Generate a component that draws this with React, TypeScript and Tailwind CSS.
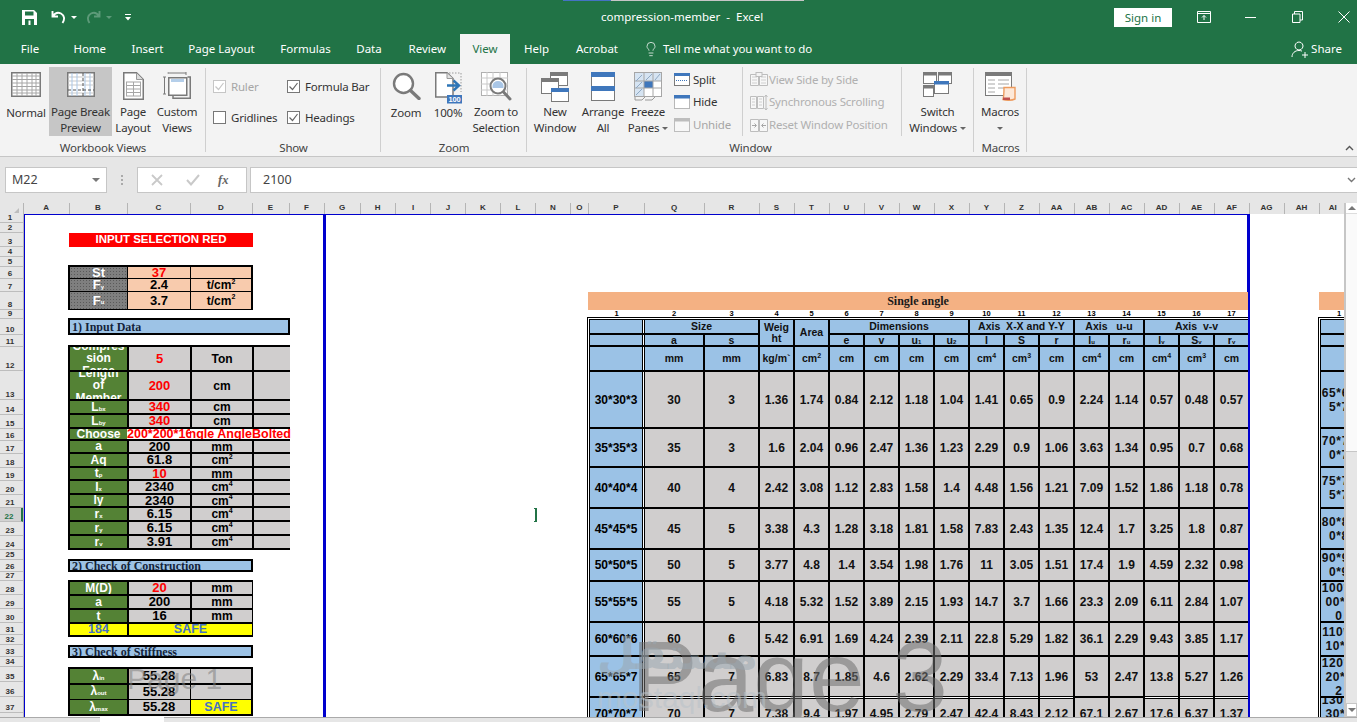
import React from 'react';
import { Lightbulb } from 'lucide-react';

const GREEN = '#217346';

// ---------- ribbon icons ----------
function NormalIcon() {
  return (
    <svg width="30" height="25" viewBox="0 0 30 25">
      <rect x="0.75" y="0.75" width="28.5" height="23.5" fill="#fff" stroke="#7a7a7a" strokeWidth="1.5" />
      {[4, 7.5, 11, 14.5, 18, 21].map((y) => (
        <line key={y} x1="1" x2="29" y1={y} y2={y} stroke="#a6a6a6" />
      ))}
      {[6, 11, 16, 21, 25].map((x) => (
        <line key={x} x1={x} x2={x} y1="1" y2="24" stroke="#a6a6a6" />
      ))}
    </svg>
  );
}

function PageBreakIcon() {
  return (
    <svg width="28" height="25" viewBox="0 0 28 25">
      <rect x="0.75" y="0.75" width="26.5" height="23.5" fill="#fff" stroke="#7a7a7a" strokeWidth="1.5" />
      {[5, 9, 13, 21].map((y) => (
        <line key={y} x1="1" x2="27" y1={y} y2={y} stroke="#c9c9c9" />
      ))}
      {[5, 10, 18, 23].map((x) => (
        <line key={x} x1={x} x2={x} y1="1" y2="24" stroke="#a9c6e6" />
      ))}
      <line x1="16" x2="16" y1="1" y2="24" stroke="#555" strokeDasharray="3 2" />
      <line x1="1" x2="27" y1="18" y2="18" stroke="#555" strokeDasharray="3 2" />
    </svg>
  );
}

function PageLayoutIcon() {
  return (
    <svg width="21" height="28" viewBox="0 0 21 28">
      <path d="M0.75 0.75H13.5L20.25 7.5V27.25H0.75Z" fill="#fff" stroke="#7a7a7a" strokeWidth="1.5" />
      <path d="M13.5 1V7.5H20" fill="#ddd" stroke="#999" />
      <rect x="3.5" y="10" width="14" height="14" fill="#fff" stroke="#a6a6a6" />
      <path d="M3.5 13.5H17.5M3.5 17H17.5M3.5 20.5H17.5M10.5 10V24" stroke="#a6a6a6" />
    </svg>
  );
}

function CustomViewsIcon() {
  return (
    <svg width="28" height="27" viewBox="0 0 28 27">
      <path d="M5 1.5V0.5M5 1H23M23 0V3" stroke="#7a7a7a" fill="none" />
      <path d="M0 5H3M1.5 5V22M0 22H3" stroke="#7a7a7a" fill="none" />
      <rect x="5.75" y="5.75" width="18" height="17.5" fill="#fff" stroke="#7a7a7a" strokeWidth="1.5" />
      <rect x="8" y="7" width="13" height="3" fill="#b5cfea" />
      <path d="M10 24V26.25H27.25V5H24.5" stroke="#7a7a7a" strokeWidth="1.5" fill="none" />
    </svg>
  );
}

function ZoomIcon() {
  return (
    <svg width="29" height="28" viewBox="0 0 29 28">
      <circle cx="11.5" cy="11.5" r="9.5" fill="#fff" stroke="#7a7a7a" strokeWidth="2.4" />
      <path d="M18.5 18.5L27 26.5" stroke="#7a7a7a" strokeWidth="3.4" strokeLinecap="round" />
    </svg>
  );
}

function Zoom100Icon() {
  return (
    <svg width="27" height="32" viewBox="0 0 27 32">
      <path d="M0.75 0.75H12L18 6.5V25H0.75Z" fill="#fff" stroke="#7a7a7a" strokeWidth="1.5" />
      <path d="M12 1V6.5H18" fill="#e3e3e3" stroke="#999" />
      <path d="M14 1H26V20" fill="none" stroke="#9a9a9a" strokeDasharray="1.5 1.5" />
      <path d="M12 13.5H23M18.5 8.5L24 13.5L18.5 18.5" fill="none" stroke="#2e75b6" strokeWidth="2.4" />
      <rect x="12" y="23" width="15" height="8.5" fill="#3f77bc" />
      <text x="19.5" y="30" fontSize="7.5" fontWeight="700" fill="#fff" textAnchor="middle" fontFamily="Liberation Sans">100</text>
    </svg>
  );
}

function ZoomSelectionIcon() {
  return (
    <svg width="31" height="30" viewBox="0 0 31 30">
      <rect x="0.5" y="0.5" width="26" height="23" fill="#fff" stroke="#b0b0b0" />
      <path d="M0 6H27M0 12H27M0 18H27M6 0V24M12 0V24M19 0V24" stroke="#c9c9c9" />
      <circle cx="17" cy="14" r="7.5" fill="#fff" stroke="#7a7a7a" strokeWidth="2" />
      <path d="M11.5 14a5.5 5 0 0 1 11 0v2h-11Z" fill="#a9c6e6" />
      <path d="M22.5 20L29 27" stroke="#7a7a7a" strokeWidth="3" strokeLinecap="round" />
    </svg>
  );
}

function NewWindowIcon() {
  return (
    <svg width="28" height="30" viewBox="0 0 28 30">
      <rect x="9.5" y="0.5" width="17" height="13" fill="#fff" stroke="#7a7a7a" />
      <rect x="9" y="0" width="18" height="4" fill="#7a7a7a" />
      <rect x="0.5" y="6.5" width="17" height="15" fill="#fff" stroke="#7a7a7a" />
      <rect x="0" y="6" width="18" height="4" fill="#7a7a7a" />
      <rect x="10.5" y="16.5" width="17" height="13" fill="#fff" stroke="#7a7a7a" />
      <rect x="10" y="16" width="18" height="4" fill="#3f77bc" />
    </svg>
  );
}

function ArrangeIcon() {
  return (
    <svg width="24" height="29" viewBox="0 0 24 29">
      <rect x="0.5" y="0.5" width="23" height="28" fill="#fff" stroke="#7a7a7a" />
      <rect x="0" y="0" width="24" height="5" fill="#3f77bc" />
      <rect x="0" y="14" width="24" height="5" fill="#3f77bc" />
    </svg>
  );
}

function FreezeIcon() {
  return (
    <svg width="28" height="29" viewBox="0 0 28 29">
      <rect x="0.5" y="0.5" width="27" height="24" fill="#fff" stroke="#a6a6a6" />
      <rect x="1" y="1" width="26" height="8" fill="#d6e4f2" />
      <rect x="1" y="1" width="9" height="23" fill="#d6e4f2" />
      <rect x="10" y="9" width="9" height="7" fill="#3f77bc" />
      <path d="M0 9H28M0 16H28M10 0V25M19 0V25" stroke="#a6a6a6" />
      <path d="M2 9L8 3M2 16L8 10M2 23L8 17M12 8L18 2M21 8L26 2" stroke="#8fa9c4" />
      <path d="M1 25V28H8L11 25M11 28H18L21 25" fill="none" stroke="#999" />
    </svg>
  );
}

function SplitIcon() {
  return (
    <svg width="16" height="13" viewBox="0 0 16 13">
      <rect x="0.5" y="0.5" width="15" height="12" fill="#fff" stroke="#7a7a7a" />
      <rect x="0" y="0" width="16" height="3" fill="#3f77bc" />
      <line x1="2" x2="14" y1="7.5" y2="7.5" stroke="#3f77bc" strokeDasharray="1 1" />
    </svg>
  );
}

function HideIcon() {
  return (
    <svg width="16" height="14" viewBox="0 0 16 14">
      <rect x="0.5" y="0.5" width="15" height="13" fill="#fff" stroke="#777" strokeDasharray="1 1" />
      <rect x="0" y="0" width="16" height="3.5" fill="#3f77bc" />
    </svg>
  );
}

function UnhideIcon() {
  return (
    <svg width="16" height="14" viewBox="0 0 16 14">
      <rect x="0.5" y="0.5" width="15" height="13" fill="#f7f7f7" stroke="#bdbdbd" />
      <rect x="0" y="0" width="16" height="3.5" fill="#bdbdbd" />
    </svg>
  );
}

function SideBySideIcon() {
  return (
    <svg width="18" height="14" viewBox="0 0 18 14">
      <path d="M0.5 2.5H8.5V13.5H0.5ZM9.5 2.5H17.5V13.5H9.5Z" fill="#f7f7f7" stroke="#bdbdbd" />
      <path d="M2 5H7M2 8H7M2 11H7M11 5H16M11 8H16M11 11H16" stroke="#cfcfcf" />
      <rect x="6" y="0.5" width="6" height="4" fill="#f3f3f3" stroke="#bdbdbd" />
    </svg>
  );
}

function SyncIcon() {
  return (
    <svg width="18" height="17" viewBox="0 0 18 17">
      <path d="M0.5 2.5H6.5V14.5H0.5ZM7.5 2.5H13.5V14.5H7.5Z" fill="#f7f7f7" stroke="#bdbdbd" />
      <path d="M2 5H5M2 8H5M2 11H5M9 5H12M9 8H12M9 11H12" stroke="#cfcfcf" />
      <path d="M16 1V16M14.5 3L16 1L17.5 3M14.5 14L16 16L17.5 14" fill="none" stroke="#bdbdbd" />
    </svg>
  );
}

function ResetIcon() {
  return (
    <svg width="18" height="14" viewBox="0 0 18 14">
      <path d="M0.5 1.5H8.5V13.5H0.5ZM9.5 1.5H17.5V13.5H9.5Z" fill="#f7f7f7" stroke="#bdbdbd" />
      <path d="M2 7.5H6M4.5 5.5L6.5 7.5L4.5 9.5M16 7.5H12M13.5 5.5L11.5 7.5L13.5 9.5" fill="none" stroke="#a6a6a6" />
    </svg>
  );
}

function SwitchIcon() {
  return (
    <svg width="29" height="25" viewBox="0 0 29 25">
      <rect x="0.5" y="0.5" width="13" height="11" fill="#fff" stroke="#7a7a7a" />
      <rect x="0" y="0" width="14" height="3.5" fill="#7a7a7a" />
      <rect x="15.5" y="0.5" width="13" height="11" fill="#fff" stroke="#7a7a7a" />
      <rect x="15" y="0" width="14" height="3.5" fill="#7a7a7a" />
      <rect x="0.5" y="13.5" width="10" height="11" fill="#fff" stroke="#7a7a7a" />
      <rect x="0" y="13" width="11" height="3.5" fill="#7a7a7a" />
      <rect x="11.5" y="9.5" width="14" height="12" fill="#fff" stroke="#7a7a7a" />
      <rect x="11" y="9" width="15" height="3.5" fill="#3f77bc" />
    </svg>
  );
}

function MacrosIcon() {
  return (
    <svg width="31" height="29" viewBox="0 0 31 29">
      <rect x="0.5" y="0.5" width="26" height="23" fill="#fff" stroke="#7a7a7a" />
      <rect x="0" y="0" width="27" height="4" fill="#7a7a7a" />
      <path d="M3 8H10M13 8H24M3 12H10M13 12H24M3 16H10M13 16H24M3 20H10" stroke="#a6a6a6" />
      <path d="M19 15.5H30V27C27 28.5 21 28.5 18 27.5C19 24 19 19 19 15.5Z" fill="#fde9d9" stroke="#ed9b5e" strokeWidth="1.4" />
      <path d="M18 25.5H25V28H18Z" fill="#c0504d" />
    </svg>
  );
}

function Caret({ className = '' }: { className?: string }) {
  return <span className={`inline-block w-0 h-0 border-x-[3px] border-x-transparent border-t-[3px] border-t-[#666] ${className}`} />;
}

function BigButton({ width, label, icon, active = false, iconClass = '' }: { width: string; label: React.ReactNode; icon: React.ReactNode; active?: boolean; iconClass?: string }) {
  return (
    <div className={`${width} h-[69px] shrink-0 flex flex-col items-center ${active ? 'bg-[#c6c6c6]' : ''}`}>
      <div className={`h-[38px] flex items-start justify-center pt-[5px] ${iconClass}`}>{icon}</div>
      <div className="text-center leading-[16px] whitespace-nowrap">{label}</div>
    </div>
  );
}

function Group({ width, label, children }: { width: string; label: string; children: React.ReactNode }) {
  return (
    <div className={`${width} shrink-0 h-[92px] flex flex-col relative`}>
      <div className="flex h-[72px] pt-[3px]">{children}</div>
      <div className="text-center leading-[16px] text-[#444] mt-[4px]">{label}</div>
      <div className="absolute right-0 top-[4px] bottom-[4px] w-px bg-[#cfcfcf]" />
    </div>
  );
}

function Check({ label, checked = false, disabled = false, width }: { label: string; checked?: boolean; disabled?: boolean; width: string }) {
  return (
    <div className={`${width} flex items-center gap-[5px] h-[13px] ${disabled ? 'text-[#a6a6a6]' : ''}`}>
      <span className={`w-[13px] h-[13px] border bg-white flex items-center justify-center ${disabled ? 'border-[#c6c6c6]' : 'border-[#777]'}`}>
        {checked && (
          <svg width="11" height="11" viewBox="0 0 11 11">
            <path d="M1.5 5.5L4.5 8.5L9.5 2" fill="none" stroke={disabled ? '#c6c6c6' : '#666'} strokeWidth="1.2" />
          </svg>
        )}
      </span>
      <span className="leading-none whitespace-nowrap">{label}</span>
    </div>
  );
}

function Ribbon() {
  return (
    <div className="h-[92px] bg-[#f3f3f3] flex font-['Noto_Sans',sans-serif] text-[11.5px] tracking-[-0.2px] text-[#333] relative">
      <Group width="w-[206px]" label="Workbook Views">
        <div className="w-[3px]" />
        <BigButton width="w-[46px]" label="Normal" icon={<NormalIcon />} />
        <BigButton width="w-[63px]" active label={<>Page Break<br />Preview</>} icon={<PageBreakIcon />} />
        <BigButton width="w-[42px]" label={<>Page<br />Layout</>} icon={<PageLayoutIcon />} />
        <BigButton width="w-[46px]" label={<>Custom<br />Views</>} icon={<CustomViewsIcon />} />
      </Group>
      <Group width="w-[175px]" label="Show">
        <div className="flex flex-col pl-[7px] pt-[13px] gap-[18px]">
          <div className="flex">
            <Check width="w-[74px]" label="Ruler" checked disabled />
            <Check width="w-[84px]" label="Formula Bar" checked />
          </div>
          <div className="flex">
            <Check width="w-[74px]" label="Gridlines" />
            <Check width="w-[84px]" label="Headings" checked />
          </div>
        </div>
      </Group>
      <Group width="w-[146px]" label="Zoom">
        <div className="w-[1px]" />
        <BigButton width="w-[48px]" label="Zoom" icon={<ZoomIcon />} />
        <BigButton width="w-[36px]" label="100%" icon={<Zoom100Icon />} iconClass="pt-[3px]" />
        <BigButton width="w-[60px]" label={<>Zoom to<br />Selection</>} icon={<ZoomSelectionIcon />} iconClass="pt-[3px]" />
      </Group>
      <Group width="w-[447px]" label="Window">
        <BigButton width="w-[56px]" label={<>New<br />Window</>} icon={<NewWindowIcon />} iconClass="pt-[4px]" />
        <BigButton width="w-[40px]" label={<>Arrange<br />All</>} icon={<ArrangeIcon />} />
        <BigButton width="w-[50px]" label={<>Freeze<br /><span>Panes <Caret className="align-middle" /></span></>} icon={<FreezeIcon />} />
        <div className="w-[70px] h-[69px] shrink-0 flex flex-col pt-[1px] pl-[1px] border-r border-[#cfcfcf] mr-0">
          <div className="h-[23px] flex items-center gap-[3px]"><SplitIcon />Split</div>
          <div className="h-[23px] flex items-center gap-[3px]"><HideIcon />Hide</div>
          <div className="h-[23px] flex items-center gap-[3px] text-[#a6a6a6]"><UnhideIcon />Unhide</div>
        </div>
        <div className="w-[159px] h-[69px] shrink-0 flex flex-col pt-[1px] pl-[7px] border-r border-[#cfcfcf] text-[#b0b0b0] whitespace-nowrap">
          <div className="h-[23px] flex items-center gap-[1px]"><SideBySideIcon />View Side by Side</div>
          <div className="h-[23px] flex items-center gap-[1px]"><SyncIcon />Synchronous Scrolling</div>
          <div className="h-[23px] flex items-center gap-[1px]"><ResetIcon />Reset Window Position</div>
        </div>
        <BigButton width="w-[71px]" label={<>Switch<br /><span>Windows <Caret className="align-middle" /></span></>} icon={<SwitchIcon />} iconClass="pt-[4px]" />
      </Group>
      <Group width="w-[53px]" label="Macros">
        <BigButton width="w-[52px]" label={<>Macros<br /><Caret className="align-middle" /></>} icon={<MacrosIcon />} iconClass="pt-[4px]" />
      </Group>
      <svg className="absolute right-[3px] bottom-[5px]" width="9" height="6" viewBox="0 0 9 6">
        <path d="M1 5L4.5 1.5L8 5" fill="none" stroke="#555" strokeWidth="1.4" />
      </svg>
    </div>
  );
}

// ---------- title bar and tabs ----------
function TitleBar() {
  return (
    <div className="h-[34px] shrink-0 flex items-center relative text-white font-['Noto_Sans',sans-serif] text-[11.5px]" style={{ background: GREEN }}>
      <div className="absolute top-0 left-[563px] w-[48px] h-px bg-[#4472c4]" />
      <div className="absolute top-0 left-[611px] w-[193px] h-px bg-[#c6c6c6]" />
      <div className="pl-[22px] flex items-center h-full">
        <svg width="15" height="15" viewBox="0 0 15 15" className="mt-[1px]">
          <path d="M0 0H12L15 3V15H0Z" fill="#fff" />
          <rect x="3" y="1.5" width="8.5" height="4" fill={GREEN} />
          <rect x="3" y="9" width="9" height="6" fill={GREEN} />
          <rect x="6.5" y="10.5" width="2" height="4.5" fill="#fff" />
        </svg>
        <svg width="15" height="14" viewBox="0 0 15 14" className="ml-[14px]">
          <path d="M1.5 1V6.5H7M2 6C4 3 7 2 10 3.5C13.5 5.5 14 9.5 11.5 13" fill="none" stroke="#fff" strokeWidth="1.9" />
        </svg>
        <span className="ml-[5px] w-0 h-0 border-x-[3px] border-x-transparent border-t-[3px] border-t-white" />
        <svg width="15" height="14" viewBox="0 0 15 14" className="ml-[9px]">
          <path d="M13.5 1V6.5H8M13 6C11 3 8 2 5 3.5C1.5 5.5 1 9.5 3.5 13" fill="none" stroke="#5d9a79" strokeWidth="1.9" />
        </svg>
        <span className="ml-[5px] w-0 h-0 border-x-[3px] border-x-transparent border-t-[3px] border-t-[#5d9a79]" />
        <svg width="6" height="7" viewBox="0 0 6 7" className="ml-[13px]">
          <path d="M0 0H6V1H0ZM0 3H6L3 6.5Z" fill="#fff" />
        </svg>
      </div>
      <div className="ml-[470px] whitespace-pre">compression-member  -  Excel</div>
      <div className="ml-auto flex items-center h-full">
        <div className="w-[58px] h-[19px] bg-white text-center leading-[19px]" style={{ color: GREEN }}>Sign in</div>
        <svg width="14" height="12" viewBox="0 0 14 12" className="ml-[25px]">
          <path d="M0.5 0.5H13.5V11.5H0.5ZM0.5 2.5H13.5M7 9V4.5M5 6.5L7 4.5L9 6.5" fill="none" stroke="#fff" />
        </svg>
        <div className="ml-[34px] w-[11px] h-px bg-white" />
        <svg width="11" height="12" viewBox="0 0 11 12" className="ml-[36px]">
          <path d="M0.5 3H8V11.5H0.5ZM2.5 3V0.5H10.5V9H8" fill="none" stroke="#fff" />
        </svg>
        <svg width="12" height="12" viewBox="0 0 12 12" className="ml-[35px] mr-[7px]">
          <path d="M0.5 0.5L11.5 11.5M11.5 0.5L0.5 11.5" stroke="#fff" />
        </svg>
      </div>
    </div>
  );
}

const TABS = [
  { name: 'File', cls: 'w-[60px]' },
  { name: 'Home', cls: 'w-[59.5px]' },
  { name: 'Insert', cls: 'w-[56px]' },
  { name: 'Page Layout', cls: 'w-[92px]' },
  { name: 'Formulas', cls: 'w-[76px]' },
  { name: 'Data', cls: 'w-[51px]' },
  { name: 'Review', cls: 'w-[65.5px]' },
  { name: 'View', cls: 'w-[50px] bg-[#f3f3f3] text-[#217346]' },
  { name: 'Help', cls: 'w-[53px]' },
  { name: 'Acrobat', cls: 'w-[68px]' },
];

function TabRow() {
  return (
    <div className="h-[30px] shrink-0 flex items-center text-white font-['Noto_Sans',sans-serif] text-[11.5px]" style={{ background: GREEN }}>
      {TABS.map((t) => (
        <div key={t.name} className={`${t.cls} h-full flex items-center justify-center shrink-0`}>{t.name}</div>
      ))}
      <Lightbulb size={16} strokeWidth={1.1} className="ml-[12px]" />
      <span className="ml-[4px] whitespace-nowrap tracking-[-0.1px]">Tell me what you want to do</span>
      <div className="ml-auto flex items-center pr-[15px]">
        <svg width="17" height="17" viewBox="0 0 17 17">
          <path d="M8 1a4 4 0 1 1-.01 0ZM1 16c0-4 3-6.5 7-6.5c1 0 2 .2 3 .6M11 14H17M14 11V17" fill="none" stroke="#fff" />
        </svg>
        <span className="ml-[3px]">Share</span>
      </div>
    </div>
  );
}

function FormulaBar() {
  return (
    <div className="h-[47px] shrink-0 bg-[#e6e6e6] border-t border-[#c6c6c6] pt-[10px] flex font-['Noto_Sans',sans-serif] text-[12.5px] text-[#444]">
      <div className="ml-[5px] w-[102px] h-[26px] bg-white border border-[#c6c6c6] flex items-center pl-[6px] pr-[6px] justify-between">
        M22
        <span className="w-0 h-0 border-x-[4px] border-x-transparent border-t-[4px] border-t-[#777]" />
      </div>
      <div className="w-[30px] flex flex-col items-center justify-center gap-[2px] h-[26px]">
        <span className="w-[2px] h-[2px] bg-[#aaa]" />
        <span className="w-[2px] h-[2px] bg-[#aaa]" />
        <span className="w-[2px] h-[2px] bg-[#aaa]" />
      </div>
      <div className="w-[110px] h-[26px] bg-white border border-[#c6c6c6] flex items-center">
        <svg width="12" height="12" viewBox="0 0 12 12" className="ml-[13px]">
          <path d="M1 1L11 11M11 1L1 11" stroke="#c9c9c9" strokeWidth="1.8" />
        </svg>
        <svg width="14" height="12" viewBox="0 0 14 12" className="ml-[23px]">
          <path d="M1 6L5 10.5L13 1" fill="none" stroke="#c9c9c9" strokeWidth="2" />
        </svg>
        <span className="ml-[18px] font-['Liberation_Serif',serif] italic font-bold text-[#666]">fx</span>
      </div>
      <div className="ml-[3px] flex-1 h-[26px] bg-white border-y border-l border-[#c6c6c6] flex items-center pl-[12px] relative">
        2100
        <svg className="absolute right-[1px] top-[9px]" width="9" height="6" viewBox="0 0 9 6">
          <path d="M1 1L4.5 4.5L8 1" fill="none" stroke="#777" strokeWidth="1.4" />
        </svg>
      </div>
    </div>
  );
}

// ---------- headings ----------
const COLS = [
  { n: 'A', c: 'w-[45.5px]' }, { n: 'B', c: 'w-[58px]' }, { n: 'C', c: 'w-[63px]' }, { n: 'D', c: 'w-[62px]' },
  { n: 'E', c: 'w-[37px]' }, { n: 'F', c: 'w-[35px]' }, { n: 'G', c: 'w-[36px]' }, { n: 'H', c: 'w-[35.5px]' },
  { n: 'I', c: 'w-[35px]' }, { n: 'J', c: 'w-[35px]' }, { n: 'K', c: 'w-[35px]' }, { n: 'L', c: 'w-[35px]' },
  { n: 'N', c: 'w-[35px]' }, { n: 'O', c: 'w-[17.5px]' }, { n: 'P', c: 'w-[56px]' }, { n: 'Q', c: 'w-[60px]' },
  { n: 'R', c: 'w-[55px]' }, { n: 'S', c: 'w-[35px]' }, { n: 'T', c: 'w-[35px]' }, { n: 'U', c: 'w-[35px]' },
  { n: 'V', c: 'w-[35px]' }, { n: 'W', c: 'w-[35px]' }, { n: 'X', c: 'w-[35px]' }, { n: 'Y', c: 'w-[35px]' },
  { n: 'Z', c: 'w-[35px]' }, { n: 'AA', c: 'w-[35px]' }, { n: 'AB', c: 'w-[35px]' }, { n: 'AC', c: 'w-[35px]' },
  { n: 'AD', c: 'w-[35px]' }, { n: 'AE', c: 'w-[35px]' }, { n: 'AF', c: 'w-[35px]' }, { n: 'AG', c: 'w-[35px]' },
  { n: 'AH', c: 'w-[35px]' }, { n: 'AI', c: 'w-[27.5px]' },
];

const ROW_HEADS = [
  'h-[9px]', 'h-[10px]', 'h-[14px]', 'h-[10px]', 'h-[10px]', 'h-[12px]', 'h-[13px]', 'h-[18px]', 'h-[9px]', 'h-[16px]',
  'h-[12px]', 'h-[24px]', 'h-[29px]', 'h-[15px]', 'h-[14px]', 'h-[12px]', 'h-[13px]', 'h-[14px]', 'h-[13px]', 'h-[14px]',
  'h-[13px]', 'h-[14px]', 'h-[14px]', 'h-[14px]', 'h-[10px]', 'h-[12px]', 'h-[9px]', 'h-[14px]', 'h-[14px]', 'h-[14px]',
  'h-[12px]', 'h-[10px]', 'h-[12px]', 'h-[10px]', 'h-[15px]', 'h-[15px]', 'h-[16px]', 'h-[14px]',
];

function RowHeadings() {
  return (
    <div className="w-[24px] shrink-0 bg-[#e6e6e6] border-r border-[#b5b5b5] overflow-hidden">
      {ROW_HEADS.map((h, i) => (
        <div
          key={i}
          className={`${h} border-b border-[#bdbdbd] flex items-end justify-center text-[8px] font-bold leading-[9px] pr-[3px] ${i === 21 ? 'bg-[#d2d2d2] text-[#217346] border-r-2 border-r-[#217346]' : 'text-[#333]'}`}
        >
          {i + 1}
        </div>
      ))}
    </div>
  );
}

// ---------- left sheet page ----------
const CELL_FONT = "font-['Liberation_Sans',sans-serif] font-bold";

function Sub({ children }: { children: React.ReactNode }) {
  return <span className="text-[6px] relative top-[2px]">{children}</span>;
}

function Band({ label, width }: { label: string; width: string }) {
  return (
    <div className={`${width} border-2 border-black bg-[#9dc3e6] flex items-center overflow-hidden font-['Liberation_Serif',serif] font-bold text-[12px] text-[#14233a] pl-[2px] whitespace-nowrap`}>
      {label}
    </div>
  );
}

function G({ children, cls = '' }: { children?: React.ReactNode; cls?: string }) {
  return <div className={`bg-[#548235] text-white flex items-center justify-center overflow-hidden text-center leading-[12.5px] ${cls}`}>{children}</div>;
}

function V({ children, cls = '' }: { children?: React.ReactNode; cls?: string }) {
  return <div className={`bg-[#d0cece] flex items-center justify-center overflow-hidden whitespace-nowrap ${cls}`}>{children}</div>;
}

function InputRow({ name, value, unit, red = false }: { name: React.ReactNode; value: string; unit: React.ReactNode; red?: boolean }) {
  return (
    <>
      <G>{name}</G>
      <V cls={`text-[13px] ${red ? 'text-[#ff0000]' : 'text-black'}`}>{value}</V>
      <V cls="text-black">{unit}</V>
      <V />
    </>
  );
}

function Sup2() {
  return <span className="text-[7px] relative -top-[3px]">2</span>;
}
function Sup3() {
  return <span className="text-[7px] relative -top-[3px]">3</span>;
}
function Sup4() {
  return <span className="text-[7px] relative -top-[3px]">4</span>;
}

const CM4 = <>cm<Sup4 /></>;

function LeftPage() {
  return (
    <div className={`w-[302px] shrink-0 h-full bg-white border-l border-t border-r-[3px] border-[#0000cd] pl-[43px] flex flex-col text-black ${CELL_FONT} text-[12px]`}>
      <div className="mt-[18px] w-[184px] ml-[1px] h-[14px] bg-[#ff0000] text-white text-center leading-[13px] text-[11.5px]">INPUT SELECTION RED</div>

      <div className="mt-[18px] w-[185px] h-[45px] bg-black p-[2px] grid grid-cols-[57px_62px_60px] grid-rows-[11px_12px_17px] gap-[1px]">
        <div className="bg-[#7f7f7f] bg-[radial-gradient(#5a5a5a_0.6px,transparent_0.7px)] bg-[length:3px_3px] text-white flex items-center justify-center text-[13px]">St</div>
        <div className="bg-[#f8cbad] text-[#ff0000] flex items-center justify-center text-[13px]">37</div>
        <div className="bg-[#f8cbad]" />
        <div className="bg-[#7f7f7f] bg-[radial-gradient(#5a5a5a_0.6px,transparent_0.7px)] bg-[length:3px_3px] text-white flex items-center justify-center text-[13px]">F<Sub>y</Sub></div>
        <div className="bg-[#f8cbad] flex items-center justify-center text-[13px]">2.4</div>
        <div className="bg-[#f8cbad] flex items-center justify-center">t/cm<Sup2 /></div>
        <div className="bg-[#7f7f7f] bg-[radial-gradient(#5a5a5a_0.6px,transparent_0.7px)] bg-[length:3px_3px] text-white flex items-center justify-center text-[13px]">F<Sub>u</Sub></div>
        <div className="bg-[#f8cbad] flex items-center justify-center text-[13px]">3.7</div>
        <div className="bg-[#f8cbad] flex items-center justify-center">t/cm<Sup2 /></div>
      </div>

      <div className="mt-[8px]"><Band label="1) Input Data" width="w-[222px] h-[17px]" /></div>

      <div className="mt-[10px] w-[222px] bg-black p-[2px] grid grid-cols-[57px_61px_60px_36px] grid-rows-[23px_27px_12px_12px_10px_11px_12px_11px_12px_11px_12px_12px_12px] gap-x-[2px] gap-y-[2px] text-[12px]">
        <InputRow name={<>Compres<br />sion<br />Force</>} value="5" unit="Ton" red />
        <InputRow name={<>Length<br />of<br />Member</>} value="200" unit="cm" red />
        <InputRow name={<>L<Sub>bx</Sub></>} value="340" unit="cm" red />
        <InputRow name={<>L<Sub>by</Sub></>} value="340" unit="cm" red />
        <G>Choose</G>
        <div className="bg-white -ml-[2px] text-[#ff0000] text-[12.5px] overflow-hidden whitespace-nowrap flex items-center justify-start leading-none">200*200*16</div>
        <div className="bg-white -ml-[2px] text-[#ff0000] text-[12.5px] overflow-hidden whitespace-nowrap flex items-center justify-end leading-none">Single Angle</div>
        <div className="bg-white -ml-[2px] -mr-[3px] z-10 text-[#ff0000] text-[12.5px] overflow-hidden whitespace-nowrap flex items-center justify-start leading-none">Bolted</div>
        <InputRow name="a" value="200" unit="mm" />
        <InputRow name="Aq" value="61.8" unit={<>cm<Sup2 /></>} />
        <InputRow name={<>t<Sub>p</Sub></>} value="10" unit="mm" red />
        <InputRow name={<>I<Sub>x</Sub></>} value="2340" unit={CM4} />
        <InputRow name="ly" value="2340" unit={CM4} />
        <InputRow name={<>r<Sub>x</Sub></>} value="6.15" unit={CM4} />
        <InputRow name={<>r<Sub>y</Sub></>} value="6.15" unit={CM4} />
        <InputRow name={<>r<Sub>v</Sub></>} value="3.91" unit={CM4} />
      </div>

      <div className="mt-[9px]"><Band label="2) Check of Construction" width="w-[185px] h-[13px]" /></div>

      <div className="mt-[8px] w-[185px] bg-black p-[2px] grid grid-cols-[57px_61px_60px] grid-rows-[12px_12px_12px_11px] gap-[2px]">
        <G>M(D)</G><V cls="text-[#ff0000] text-[13px]">20</V><V>mm</V>
        <G>a</G><V cls="text-[13px]">200</V><V>mm</V>
        <G>t</G><V cls="text-[13px]">16</V><V>mm</V>
        <div className="bg-[#ffff00] text-[#4472c4] flex items-center justify-center text-[12.5px]">184</div>
        <div className="col-span-2 bg-[#ffff00] text-[#4472c4] flex items-center justify-center text-[12.5px]">SAFE</div>
      </div>

      <div className="mt-[8px]"><Band label="3) Check of Stiffness" width="w-[185px] h-[13px]" /></div>

      <div className="mt-[9px] w-[185px] bg-black p-[2px] grid grid-cols-[57px_61px_60px] grid-rows-[14px_14px_14px] gap-[1.5px]">
        <G>λ<Sub>in</Sub></G><V cls="text-[13px]">55.28</V><V />
        <G>λ<Sub>out</Sub></G><V cls="text-[13px]">55.28</V><V />
        <G>λ<Sub>max</Sub></G><V cls="text-[13px]">55.28</V>
        <div className="bg-[#ffff00] text-[#4472c4] flex items-center justify-center text-[12.5px]">SAFE</div>
      </div>
    </div>
  );
}

// ---------- angle table ----------
const ANGLES = [
  ['30*30*3', '30', '3', '1.36', '1.74', '0.84', '2.12', '1.18', '1.04', '1.41', '0.65', '0.9', '2.24', '1.14', '0.57', '0.48', '0.57'],
  ['35*35*3', '35', '3', '1.6', '2.04', '0.96', '2.47', '1.36', '1.23', '2.29', '0.9', '1.06', '3.63', '1.34', '0.95', '0.7', '0.68'],
  ['40*40*4', '40', '4', '2.42', '3.08', '1.12', '2.83', '1.58', '1.4', '4.48', '1.56', '1.21', '7.09', '1.52', '1.86', '1.18', '0.78'],
  ['45*45*5', '45', '5', '3.38', '4.3', '1.28', '3.18', '1.81', '1.58', '7.83', '2.43', '1.35', '12.4', '1.7', '3.25', '1.8', '0.87'],
  ['50*50*5', '50', '5', '3.77', '4.8', '1.4', '3.54', '1.98', '1.76', '11', '3.05', '1.51', '17.4', '1.9', '4.59', '2.32', '0.98'],
  ['55*55*5', '55', '5', '4.18', '5.32', '1.52', '3.89', '2.15', '1.93', '14.7', '3.7', '1.66', '23.3', '2.09', '6.11', '2.84', '1.07'],
  ['60*60*6', '60', '6', '5.42', '6.91', '1.69', '4.24', '2.39', '2.11', '22.8', '5.29', '1.82', '36.1', '2.29', '9.43', '3.85', '1.17'],
  ['65*65*7', '65', '7', '6.83', '8.7', '1.85', '4.6', '2.62', '2.29', '33.4', '7.13', '1.96', '53', '2.47', '13.8', '5.27', '1.26'],
  ['70*70*7', '70', '7', '7.38', '9.4', '1.97', '4.95', '2.79', '2.47', '42.4', '8.43', '2.12', '67.1', '2.67', '17.6', '6.37', '1.37'],
];

const TABLE_ROWS = 'grid-rows-[13px_10px_23px_55px_37px_39px_39px_30px_39px_32px_39px_32px]';

function H({ children, cls = '' }: { children?: React.ReactNode; cls?: string }) {
  return <div className={`bg-[#9bc2e6] text-[#111] text-[10.5px] flex items-center justify-center overflow-hidden whitespace-nowrap leading-none ${cls}`}>{children}</div>;
}

function FirstCol({ children, cls = 'bg-[#9bc2e6]' }: { children?: React.ReactNode; cls?: string }) {
  return (
    <div className="-mr-[2px] border-r-[3px] border-double border-black bg-white overflow-hidden">
      <div className={`h-full ${cls} flex items-center justify-center whitespace-nowrap`}>{children}</div>
    </div>
  );
}

function MainTable() {
  return (
    <div className="w-[660px] ml-[262px] mt-[77px]">
      <div className="h-[18px] bg-[#f4b183] flex items-center justify-center font-['Liberation_Serif',serif] font-bold text-[12px] text-[#1a1a1a]">Single angle</div>
      <div className="h-[7px] pl-[2px] grid grid-cols-[53px_58px_53px_repeat(14,33px)] gap-x-[2px] bg-white text-[7.5px] leading-[8px] text-center font-bold">
        {Array.from({ length: 17 }, (_, i) => <div key={i}>{i + 1}</div>)}
      </div>
      <div className="border-l-[3px] border-t-[3px] border-double border-black bg-white -ml-px">
        <div className={`bg-black grid grid-cols-[53px_58px_53px_repeat(14,33px)] ${TABLE_ROWS} gap-[2px] text-[12px] font-bold`}>
          <FirstCol />
          <H cls="col-span-2">Size</H>
          <H cls="row-span-2 whitespace-normal text-center leading-[13px] flex-col">Weig<br />ht</H>
          <H cls="row-span-2">Area</H>
          <H cls="col-span-4">Dimensions</H>
          <H cls="col-span-3 whitespace-pre">Axis  X-X and Y-Y</H>
          <H cls="col-span-2 whitespace-pre">Axis   u-u</H>
          <H cls="col-span-3 whitespace-pre">Axis  v-v</H>

          <FirstCol />
          <H>a</H><H>s</H>
          <H>e</H><H>v</H><H>u<Sub>1</Sub></H><H>u<Sub>2</Sub></H>
          <H>I</H><H>S</H><H>r</H><H>I<Sub>u</Sub></H><H>r<Sub>u</Sub></H><H>I<Sub>v</Sub></H><H>S<Sub>v</Sub></H><H>r<Sub>v</Sub></H>

          <FirstCol />
          <H>mm</H><H>mm</H><H>kg/m`</H><H>cm<Sup2 /></H>
          <H>cm</H><H>cm</H><H>cm</H><H>cm</H>
          <H>cm<Sup4 /></H><H>cm<Sup3 /></H><H>cm</H>
          <H>cm<Sup4 /></H><H>cm</H>
          <H>cm<Sup4 /></H><H>cm<Sup3 /></H><H>cm</H>

          {ANGLES.map((row, r) =>
            row.map((v, c) => {
              if (c === 0) return <FirstCol key={`${r}-${c}`}>{v}</FirstCol>;
              const last = r === ANGLES.length - 1 && c !== 12 && c !== 13;
              return (
                <div
                  key={`${r}-${c}`}
                  className={`bg-[#d0cece] flex items-center justify-center overflow-hidden whitespace-nowrap text-[#111] ${last ? '-mt-px border-t border-white relative' : ''}`}
                >
                  {last && <span className="absolute top-0 inset-x-0 h-px bg-black" />}
                  {v}
                </div>
              );
            }),
          )}
        </div>
      </div>
    </div>
  );
}

const SIDE_LABELS = [
  ['65*65', '5*7'],
  ['70*70', '0*7'],
  ['75*75', '5*7'],
  ['80*80', '0*8'],
  ['90*90', '0*9'],
  ['100*1', '00*1', '0'],
  ['110*1', '10*1'],
  ['120*1', '20*1', '2'],
  ['130*1', '30*1', '3'],
];

function SideTable() {
  return (
    <div className="w-[60px] shrink-0 ml-[68px] mt-[78px]">
      <div className="h-[18px] ml-px bg-[#f4b183]" />
      <div className="h-[7px] pl-[3px] w-[39px] text-[7.5px] leading-[8px] text-center font-bold">1</div>
      <div className="border-l-[3px] border-t-[3px] border-double border-black bg-white">
        <div className={`bg-black grid grid-cols-[36px] w-[36px] ${TABLE_ROWS} gap-y-[2px] text-[12px] font-bold`}>
          <H /><H /><H />
          {SIDE_LABELS.map((lines) => (
            <div key={lines[0]} className="bg-[#9bc2e6] text-[#111] flex flex-col items-center justify-center overflow-hidden leading-[14px] tracking-[0.6px]">
              {lines.map((l) => <span key={l} className="whitespace-nowrap">{l}</span>)}
            </div>
          ))}
        </div>
      </div>
    </div>
  );
}

function Scrollbar() {
  return (
    <div className="w-[13px] shrink-0 h-[514px] bg-[#e6e6e6] border-l-[2px] border-[#c6c6c6] flex flex-col">
      <div className="h-[11px] bg-white flex items-center justify-center border-b border-[#ddd]">
        <span className="w-0 h-0 border-x-[4px] border-x-transparent border-b-[4px] border-b-[#777]" />
      </div>
      <div className="h-[238px] bg-[#fafafa] border-b border-[#c6c6c6]" />
      <div className="mt-auto h-[14px] bg-white flex items-center justify-center border border-[#c6c6c6]">
        <span className="w-0 h-0 border-x-[4px] border-x-transparent border-t-[4px] border-t-[#777]" />
      </div>
    </div>
  );
}

function SheetArea() {
  return (
    <div className={`flex flex-1 min-h-0 ${CELL_FONT}`}>
      <div className="w-[24px] shrink-0 flex flex-col h-[514px]">
        <div className="h-[11px] shrink-0 bg-[#e6e6e6] border-r border-[#b5b5b5] flex items-end justify-end pr-[4px] pb-[1px]">
          <span className="w-0 h-0 border-l-[5px] border-l-transparent border-b-[5px] border-b-[#bdbdbd]" />
        </div>
        <RowHeadings />
      </div>
      <div className="w-[1320px] shrink-0 flex flex-col h-[514px]">
        <div className="h-[11px] shrink-0 flex bg-[#e6e6e6] text-[8px] leading-[10px] text-[#333] overflow-hidden">
          {COLS.map((c) => (
            <div key={c.n} className={`${c.c} shrink-0 text-center border-r border-[#b5b5b5]`}>{c.n}</div>
          ))}
        </div>
        <div className="flex-1 min-h-0 bg-white flex overflow-hidden relative">
          <LeftPage />
          <div className="w-[924px] shrink-0 h-full border-t border-r-[3px] border-[#0000cd]">
            <MainTable />
          </div>
          <SideTable />

          {/* selected cell M22 */}
          <div className="absolute left-[510px] top-[294px] w-[3px] h-[14px] border-y border-r-2 border-[#217346]" />

          {/* page watermarks */}
          <div className="absolute left-[103px] top-[450px] text-[30px] font-normal leading-none text-[#808080]/55 pointer-events-none">Page 1</div>
          <div className="absolute left-[607px] top-[412px] text-[100px] font-normal leading-none text-[#6f6f6f]/55 pointer-events-none">Page 3</div>
          <div className="absolute left-[573px] top-[418px] text-[44px] font-['DejaVu_Sans',sans-serif] font-bold leading-none text-[#9aa7b0]/55 pointer-events-none">مستقل</div>
          <div className="absolute left-[573px] top-[469px] text-[30px] font-normal leading-none text-[#b8c2c9]/55 pointer-events-none">mostaql.com</div>
        </div>
      </div>
      <Scrollbar />
    </div>
  );
}

export default function App() {
  return (
    <div className="w-[1357px] h-[722px] overflow-hidden flex flex-col bg-white font-['Liberation_Sans',sans-serif]">
      <TitleBar />
      <TabRow />
      <Ribbon />
      <FormulaBar />
      <SheetArea />
      <div className="h-[5px] shrink-0 flex bg-[#e6e6e6] border-t border-[#aaa]">
        <div className="ml-[100px] w-[64px] bg-white -mt-px" />
      </div>
    </div>
  );
}
